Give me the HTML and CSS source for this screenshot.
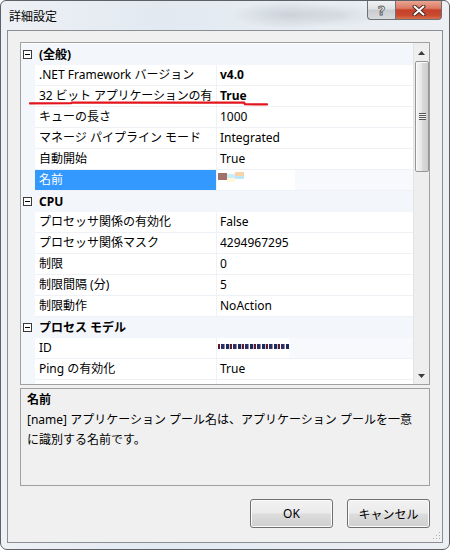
FILE: index.html
```html
<!DOCTYPE html>
<html lang="ja">
<head>
<meta charset="utf-8">
<link rel="stylesheet" href="styles.css">
</head>
<body>
<div class="window">
  <div class="titlebar">
    <span class="title">詳細設定</span>
    <div class="caption">
      <div class="cbtn help"><span class="q">?</span></div>
      <div class="cbtn close">
        <svg width="14" height="11" viewBox="0 0 14 11">
          <path d="M2.5 1.5 L11.5 9.5 M11.5 1.5 L2.5 9.5" stroke="#4a2a22" stroke-width="4" stroke-linecap="round"/>
          <path d="M2.5 1.5 L11.5 9.5 M11.5 1.5 L2.5 9.5" stroke="#ffffff" stroke-width="2" stroke-linecap="round"/>
        </svg>
      </div>
    </div>
  </div>
  <div class="client">
    <div class="grid">
      <div class="rows">
        <div class="row cat"><div class="gutter"><span class="exp"></span></div><div class="cattext">(全般)</div></div>
        <div class="row"><div class="gutter"></div><div class="label">.NET Framework バージョン</div><div class="value bold">v4.0</div></div>
        <div class="row"><div class="gutter"></div><div class="label tight">32 ビット アプリケーションの有</div><div class="value bold">True</div></div>
        <div class="row"><div class="gutter"></div><div class="label">キューの長さ</div><div class="value">1000</div></div>
        <div class="row"><div class="gutter"></div><div class="label">マネージ パイプライン モード</div><div class="value">Integrated</div></div>
        <div class="row"><div class="gutter"></div><div class="label">自動開始</div><div class="value">True</div></div>
        <div class="row"><div class="gutter"></div><div class="label selected">名前</div><div class="value redacted"><span class="blur-name"><i class="b1"></i><i class="b2"></i><i class="b3"></i></span></div></div>
        <div class="row cat"><div class="gutter"><span class="exp"></span></div><div class="cattext">CPU</div></div>
        <div class="row"><div class="gutter"></div><div class="label">プロセッサ関係の有効化</div><div class="value">False</div></div>
        <div class="row"><div class="gutter"></div><div class="label">プロセッサ関係マスク</div><div class="value">4294967295</div></div>
        <div class="row"><div class="gutter"></div><div class="label">制限</div><div class="value">0</div></div>
        <div class="row"><div class="gutter"></div><div class="label">制限間隔 (分)</div><div class="value">5</div></div>
        <div class="row"><div class="gutter"></div><div class="label">制限動作</div><div class="value">NoAction</div></div>
        <div class="row cat"><div class="gutter"><span class="exp"></span></div><div class="cattext">プロセス モデル</div></div>
        <div class="row"><div class="gutter"></div><div class="label">ID</div><div class="value redacted id"><span class="blur-id"></span></div></div>
        <div class="row"><div class="gutter"></div><div class="label">Ping の有効化</div><div class="value">True</div></div>
        <div class="row"><div class="gutter"></div><div class="label"></div><div class="value"></div></div>
      </div>
      <div class="scrollbar">
        <div class="sarrow"><svg width="7" height="4" viewBox="0 0 7 4"><path d="M0 4 L3.5 0 L7 4 Z" fill="#3c3c3c"/></svg></div>
        <div class="thumb"><span class="grip"></span></div>
        <div class="track"></div>
        <div class="sarrow"><svg width="7" height="4" viewBox="0 0 7 4"><path d="M0 0 L7 0 L3.5 4 Z" fill="#3c3c3c"/></svg></div>
      </div>
    </div>
    <div class="desc">
      <div class="desc-title">名前</div>
      <div class="desc-text">[name] アプリケーション プール名は、アプリケーション プールを一意<br>に識別する名前です。</div>
    </div>
    <div class="buttons">
      <button class="btn">OK</button>
      <button class="btn">キャンセル</button>
    </div>
    <svg class="sizegrip" width="9" height="9" viewBox="0 0 9 9">
      <rect x="7" y="1" width="1" height="1" fill="#b0b0b0"/>
      <rect x="4" y="4" width="1" height="1" fill="#b0b0b0"/><rect x="7" y="4" width="1" height="1" fill="#b0b0b0"/>
      <rect x="1" y="7" width="1" height="1" fill="#b0b0b0"/><rect x="4" y="7" width="1" height="1" fill="#b0b0b0"/><rect x="7" y="7" width="1" height="1" fill="#b0b0b0"/>
    </svg>
  </div>
</div>
<svg class="markup" width="450" height="550" viewBox="0 0 450 550">
  <path d="M30 103.4 L71 103.2 L72 102.6 L244 102.6 L245 104.2 L267 104.4" stroke="#e3151c" stroke-width="2.2" fill="none" stroke-linecap="round"/>
</svg>
</body>
</html>
```

FILE: styles.css
```css
* { box-sizing: border-box; }

body {
  margin: 0;
  width: 450px;
  height: 550px;
  overflow: hidden;
  background: #ffffff;
  font-family: "Noto Sans", "Noto Sans CJK JP", sans-serif;
  font-size: 12px;
  color: #000;
}

.window {
  width: 450px;
  height: 550px;
  border: 1px solid #5e6266;
  border-radius: 6px 6px 7px 7px;
  background:
    radial-gradient(ellipse 60px 14px at 290px 14px, rgba(150,158,168,0.35), rgba(150,158,168,0) 100%),
    radial-gradient(ellipse 40px 12px at 340px 14px, rgba(170,176,184,0.25), rgba(170,176,184,0) 100%),
    linear-gradient(90deg, #eef1f5 0%, #e2e9f1 35%, #e6ecf2 60%, #eceff3 100%);
  padding: 0 6px 6px 6px;
  display: flex;
  flex-direction: column;
}

.titlebar {
  height: 29px;
  flex: none;
  display: flex;
  align-items: flex-start;
  justify-content: space-between;
}

.title {
  padding-left: 2px;
  line-height: 29px;
  font-family: "Noto Sans CJK JP", sans-serif;
  font-size: 12px;
  color: #000;
}

.caption {
  display: flex;
  margin-right: 1px;
}

.cbtn {
  height: 19px;
  display: flex;
  align-items: center;
  justify-content: center;
  border: 1px solid #6d7075;
  border-top: none;
}

.help {
  width: 28px;
  border-right: none;
  border-radius: 0 0 0 4px;
  background: linear-gradient(180deg, #f0f1f2 0%, #dfe1e3 45%, #c9cccf 50%, #d8dadc 100%);
}

.q {
  font-family: "DejaVu Sans", sans-serif;
  font-weight: bold;
  font-size: 13px;
  line-height: 13px;
  color: #f4f4f4;
  -webkit-text-stroke: 0.8px #55595e;
}

.close {
  width: 47px;
  border-radius: 0 0 4px 0;
  background: linear-gradient(180deg, #e9a593 0%, #dc7b64 40%, #c7402a 50%, #c94a30 80%, #d8704e 100%);
}

.client {
  position: relative;
  flex: 1;
  border: 1px solid #8c8e91;
  background: #f0f0f0;
  padding: 11px 12px 0 12px;
  display: flex;
  flex-direction: column;
}

.grid {
  height: 343px;
  flex: none;
  border: 1px solid #a0a0a0;
  background: #ffffff;
  display: flex;
  overflow: hidden;
}

.rows {
  flex: 1;
  padding-top: 1px;
  overflow: hidden;
}

.row {
  display: flex;
  height: 21px;
  line-height: 20px;
  white-space: nowrap;
}

.gutter {
  width: 14px;
  flex: none;
  background: #f3f6fa;
  position: relative;
}

.row.cat {
  background: #f3f6fa;
  align-items: center;
}

.row.cat .gutter {
  height: 21px;
  display: flex;
  align-items: center;
}

.exp {
  width: 9px;
  height: 9px;
  margin-left: 2px;
  border: 1px solid #3a3a3a;
  background: #ffffff;
  position: relative;
}

.exp::after {
  content: "";
  position: absolute;
  left: 1px;
  top: 3px;
  width: 5px;
  height: 1px;
  background: #000;
}

.cattext {
  padding-left: 4px;
  font-weight: bold;
  line-height: 20px;
}

.label {
  width: 182px;
  flex: none;
  padding-left: 4px;
  overflow: hidden;
  border-right: 1px solid #eef1f5;
  border-bottom: 1px solid #eef1f5;
}

.label.tight { letter-spacing: -0.15px; }

.label.selected {
  background: #3399ff;
  color: #ffffff;
}

.value {
  flex: 1;
  padding-left: 3px;
  overflow: hidden;
  border-bottom: 1px solid #eef1f5;
}

.bold { font-weight: bold; }

.redacted {
  background: linear-gradient(90deg, #ffffff 0, #ffffff 78px, #f7f9fc 78px);
  padding-left: 1px;
}

.redacted.id {
  background: linear-gradient(90deg, #ffffff 0, #ffffff 72px, #f7f9fc 72px);
}

.blur-name {
  display: inline-flex;
  vertical-align: top;
  margin-top: 2px;
  height: 9px;
}

.blur-name i { display: block; }

.b1 { width: 9px; height: 7px; margin-top: 1px; background: #a1706a; }
.b2 { width: 8px; height: 8px; margin-top: 2px; background: linear-gradient(180deg, #c9eef9 0 4px, #fdf9d9 4px); }
.b3 { width: 9px; height: 7px; background: linear-gradient(180deg, #fad1a8 0 4px, #bde6f7 4px); }

.blur-id {
  display: inline-block;
  vertical-align: top;
  margin-top: 6px;
  width: 71px;
  height: 5px;
  background: repeating-linear-gradient(90deg, #5c1c2c 0 2px, #ffffff 2px 3px, #2a2f66 3px 6px, #9a8aa0 6px 7px, #ffffff 7px 8px, #1e2a5e 8px 11px, #c7c0d0 11px 12px);
}

.scrollbar {
  width: 16px;
  flex: none;
  background: #eeeeee;
  border-left: 1px solid #e4e4e4;
  display: flex;
  flex-direction: column;
  padding-top: 1px;
}

.sarrow {
  height: 17px;
  flex: none;
  display: flex;
  align-items: center;
  justify-content: center;
}

.thumb {
  height: 111px;
  flex: none;
  margin: 0 0 0 1px;
  width: 14px;
  border: 1px solid #959595;
  border-radius: 2px;
  background: linear-gradient(90deg, #f3f3f3 0%, #e8e8e8 45%, #d9d9d9 55%, #cfcfcf 100%);
  box-shadow: inset 1px 1px 0 #fbfbfb;
  display: flex;
  align-items: center;
  justify-content: center;
}

.grip {
  width: 7px;
  height: 7px;
  background: repeating-linear-gradient(180deg, #555555 0 1px, #f4f4f4 1px 2px);
}

.track { flex: 1; }

.desc {
  margin-top: 3px;
  height: 98px;
  flex: none;
  border: 1px solid #a0a0a0;
  background: #f0f0f0;
  padding: 1px 6px 0 6px;
  line-height: 20px;
  white-space: nowrap;
}

.desc-title { font-weight: bold; }

.buttons {
  margin-top: 13px;
  display: flex;
  justify-content: flex-end;
  gap: 14px;
}

.btn {
  width: 83px;
  height: 29px;
  margin: 0;
  padding: 0;
  border: 1px solid #707070;
  border-radius: 3px;
  background: linear-gradient(180deg, #f2f2f2 0%, #ebebeb 48%, #dddddd 52%, #cfcfcf 100%);
  box-shadow: inset 0 0 0 1px #fbfbfb;
  font-family: "Noto Sans", "Noto Sans CJK JP", sans-serif;
  font-size: 12px;
  color: #000;
}

.sizegrip {
  position: absolute;
  right: 1px;
  bottom: 2px;
}

.markup {
  position: absolute;
  left: 0;
  top: 0;
  pointer-events: none;
}
```
